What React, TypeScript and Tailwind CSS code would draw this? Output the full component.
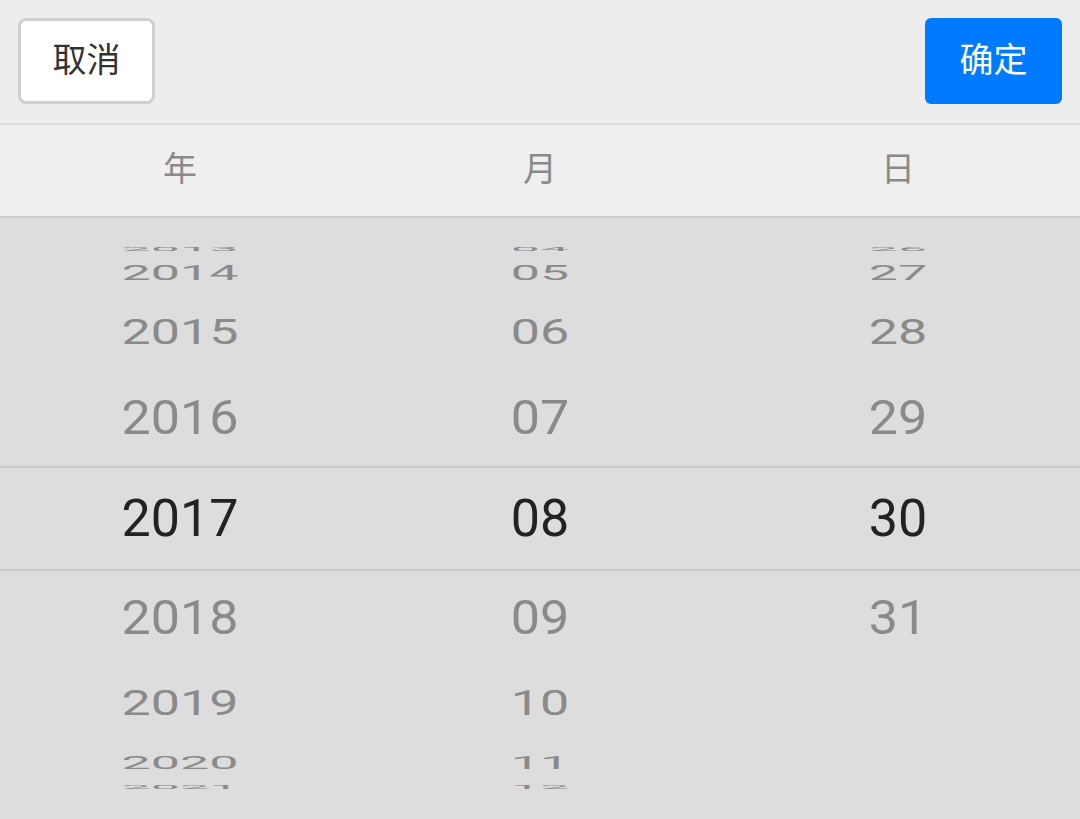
import React from "react";

const years = { above: ["2013", "2014", "2015", "2016"], sel: "2017", below: ["2018", "2019", "2020", "2021"] };
const months = { above: ["04", "05", "06", "07"], sel: "08", below: ["09", "10", "11", "12"] };
const days = { above: ["26", "27", "28", "29"], sel: "30", below: ["31", "", "", ""] };

const aboveRows = [
  { h: "h-[14px]", s: "scale-y-[0.1]" },
  { h: "h-[36px]", s: "scale-y-[0.38]" },
  { h: "h-[82px]", s: "scale-y-[0.67]" },
  { h: "h-[88px]", s: "scale-y-[0.93]" },
];
const belowRows = [
  { h: "h-[94px]", s: "scale-y-[0.93]" },
  { h: "h-[78px]", s: "scale-y-[0.67]" },
  { h: "h-[40px]", s: "scale-y-[0.36]" },
  { h: "h-[8px]", s: "scale-y-[0.1]" },
];

export default function App() {
  const cols = [years, months, days];
  const font = { fontFamily: "Roboto, 'Noto Sans CJK SC', sans-serif" };
  const cjk = { fontFamily: "'Noto Sans CJK SC', sans-serif" };
  return (
    <div className="w-[1080px] h-[819px] overflow-hidden bg-[#dddddd] flex flex-col" style={font}>
      <div className="h-[123px] bg-[#ededed] flex items-start justify-between px-[18px] pt-[18px] shrink-0">
        <div className="w-[137px] h-[86px] bg-white border-[3px] border-[#cfcfcf] rounded-[8px] flex items-center justify-center pb-[8px] text-[34px] text-[#333333]" style={cjk}>
          取消
        </div>
        <div className="w-[137px] h-[86px] bg-[#007aff] rounded-[6px] flex items-center justify-center pb-[8px] text-[34px] text-white" style={cjk}>
          确定
        </div>
      </div>
      <div className="h-[2px] bg-[#dcdcdc] shrink-0" />
      <div className="h-[93px] bg-[#efefef] grid grid-cols-3 items-center shrink-0 text-[34px] text-[#8a8a8a] border-b-2 border-[#cccccc]" style={cjk}>
        <div className="text-center -mt-[8px]">年</div>
        <div className="text-center -mt-[8px]">月</div>
        <div className="text-center -mt-[8px] pr-[4px]">日</div>
      </div>
      <div className="flex-1 flex flex-col">
        <div className="grid grid-cols-3 pt-[24px] h-[248px]">
          {cols.map((c, ci) => (
            <div key={ci} className="flex flex-col">
              {aboveRows.map((r, i) => (
                <div key={i} className={`${r.h} flex items-center justify-center`}>
                  <span className={`${r.s} text-[52px] leading-none text-[#8a8a8a] ${ci === 2 ? "pr-[4px]" : ""}`}>{c.above[i]}</span>
                </div>
              ))}
            </div>
          ))}
        </div>
        <div className="grid grid-cols-3 h-[105px] border-y-2 border-[#c8c8c8] items-center">
          {cols.map((c, ci) => (
            <div key={ci} className={`text-center text-[52px] leading-none text-[#222222] ${ci === 2 ? "pr-[4px]" : ""}`}>{c.sel}</div>
          ))}
        </div>
        <div className="grid grid-cols-3">
          {cols.map((c, ci) => (
            <div key={ci} className="flex flex-col">
              {belowRows.map((r, i) => (
                <div key={i} className={`${r.h} flex items-center justify-center`}>
                  <span className={`${r.s} text-[52px] leading-none text-[#8a8a8a] ${ci === 2 ? "pr-[4px]" : ""}`}>{c.below[i]}</span>
                </div>
              ))}
            </div>
          ))}
        </div>
      </div>
    </div>
  );
}
